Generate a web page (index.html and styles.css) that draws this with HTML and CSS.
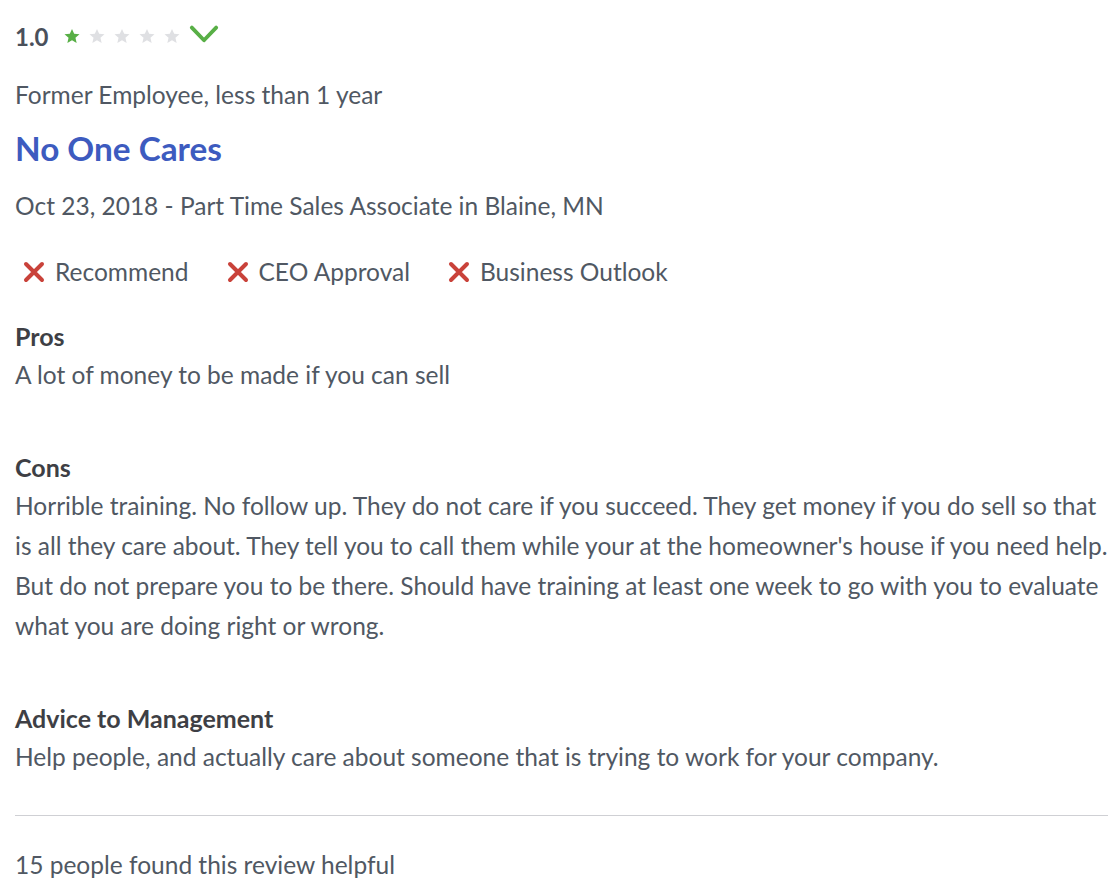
FILE: index.html
```html
<!DOCTYPE html>
<html lang="en">
<head>
<meta charset="utf-8">
<title>Review</title>
<link rel="stylesheet" href="styles.css">
</head>
<body>
<article class="review">
  <div class="rating-row">
    <span class="rating-value">1.0</span>
    <span class="stars">
      <svg class="star on" viewBox="0 0 24 24"><path d="M12 2.5l2.9 6.6 7.1.6-5.4 4.7 1.6 7-6.2-3.7-6.2 3.7 1.6-7L2 9.7l7.1-.6z"/></svg>
      <svg class="star" viewBox="0 0 24 24"><path d="M12 2.5l2.9 6.6 7.1.6-5.4 4.7 1.6 7-6.2-3.7-6.2 3.7 1.6-7L2 9.7l7.1-.6z"/></svg>
      <svg class="star" viewBox="0 0 24 24"><path d="M12 2.5l2.9 6.6 7.1.6-5.4 4.7 1.6 7-6.2-3.7-6.2 3.7 1.6-7L2 9.7l7.1-.6z"/></svg>
      <svg class="star" viewBox="0 0 24 24"><path d="M12 2.5l2.9 6.6 7.1.6-5.4 4.7 1.6 7-6.2-3.7-6.2 3.7 1.6-7L2 9.7l7.1-.6z"/></svg>
      <svg class="star" viewBox="0 0 24 24"><path d="M12 2.5l2.9 6.6 7.1.6-5.4 4.7 1.6 7-6.2-3.7-6.2 3.7 1.6-7L2 9.7l7.1-.6z"/></svg>
    </span>
    <svg class="chevron" viewBox="0 0 28 18"><path d="M2.5 2.5L14 14.5 25.5 2.5"/></svg>
  </div>
  <p class="author">Former Employee, less than 1 year</p>
  <h2 class="title">No One Cares</h2>
  <p class="meta">Oct 23, 2018 - Part Time Sales Associate in Blaine, MN</p>
  <ul class="flags">
    <li><svg class="x" viewBox="0 0 24 24"><path d="M4 4L20 20M20 4L4 20"/></svg>Recommend</li>
    <li><svg class="x" viewBox="0 0 24 24"><path d="M4 4L20 20M20 4L4 20"/></svg>CEO Approval</li>
    <li><svg class="x" viewBox="0 0 24 24"><path d="M4 4L20 20M20 4L4 20"/></svg>Business Outlook</li>
  </ul>
  <section class="block">
    <h3>Pros</h3>
    <p>A lot of money to be made if you can sell</p>
  </section>
  <section class="block">
    <h3>Cons</h3>
    <p>Horrible training. No follow up. They do not care if you succeed. They get money if you do sell so that is all they care about. They tell you to call them while your at the homeowner's house if you need help. But do not prepare you to be there. Should have training at least one week to go with you to evaluate what you are doing right or wrong.</p>
  </section>
  <section class="block">
    <h3>Advice to Management</h3>
    <p>Help people, and actually care about someone that is trying to work for your company.</p>
  </section>
  <hr class="divider">
  <footer class="helpful">15 people found this review helpful</footer>
</article>
</body>
</html>
```
FILE: styles.css
```css
html, body {
  margin: 0;
  padding: 0;
  background: #ffffff;
}
body {
  font-family: Lato, "Open Sans", Arial, sans-serif;
  color: #505863;
  font-size: 24.5px;
}
.review {
  width: 1096px;
  padding: 16px 0 0 15px;
}
.rating-row {
  display: flex;
  align-items: center;
  height: 40px;
}
.rating-value {
  font-weight: 700;
  font-size: 24px;
  color: #4a505b;
}
.stars {
  display: flex;
  gap: 7px;
  margin-left: 14px;
}
.star {
  width: 18px;
  height: 18px;
  fill: #dfe0e3;
}
.star.on {
  fill: #58af46;
}
.chevron {
  width: 30px;
  height: 19px;
  margin-left: 8px;
  margin-top: -3px;
  fill: none;
  stroke: #58af46;
  stroke-width: 3.6;
  stroke-linecap: round;
  stroke-linejoin: round;
}
.author {
  margin: 19px 0 0;
  line-height: 40px;
}
.title {
  margin: 11px 0 0;
  font-size: 33.3px;
  line-height: 44px;
  font-weight: 700;
  color: #3d5bbf;
}
.meta {
  margin: 16px 0 0;
  line-height: 40px;
}
.flags {
  list-style: none;
  margin: 26px 0 0;
  padding: 0 0 0 7px;
  display: flex;
  gap: 37px;
  line-height: 40px;
}
.flags li {
  display: flex;
  align-items: center;
}
.x {
  width: 24px;
  height: 24px;
  margin-right: 9px;
  fill: none;
  stroke: #c9423a;
  stroke-width: 4;
  stroke-linecap: round;
}
.block {
  margin-top: 25px;
}
.block + .block {
  margin-top: 53px;
}
.block h3 {
  margin: 0;
  font-size: 25px;
  font-weight: 700;
  line-height: 38px;
  color: #3e3f45;
}
.block p {
  margin: 0;
  line-height: 40px;
}
.divider {
  margin: 38px 3px 0 0;
  border: 0;
  border-top: 1px solid #cfd0d4;
  height: 0;
}
.helpful {
  margin-top: 29px;
  line-height: 40px;
}
```
